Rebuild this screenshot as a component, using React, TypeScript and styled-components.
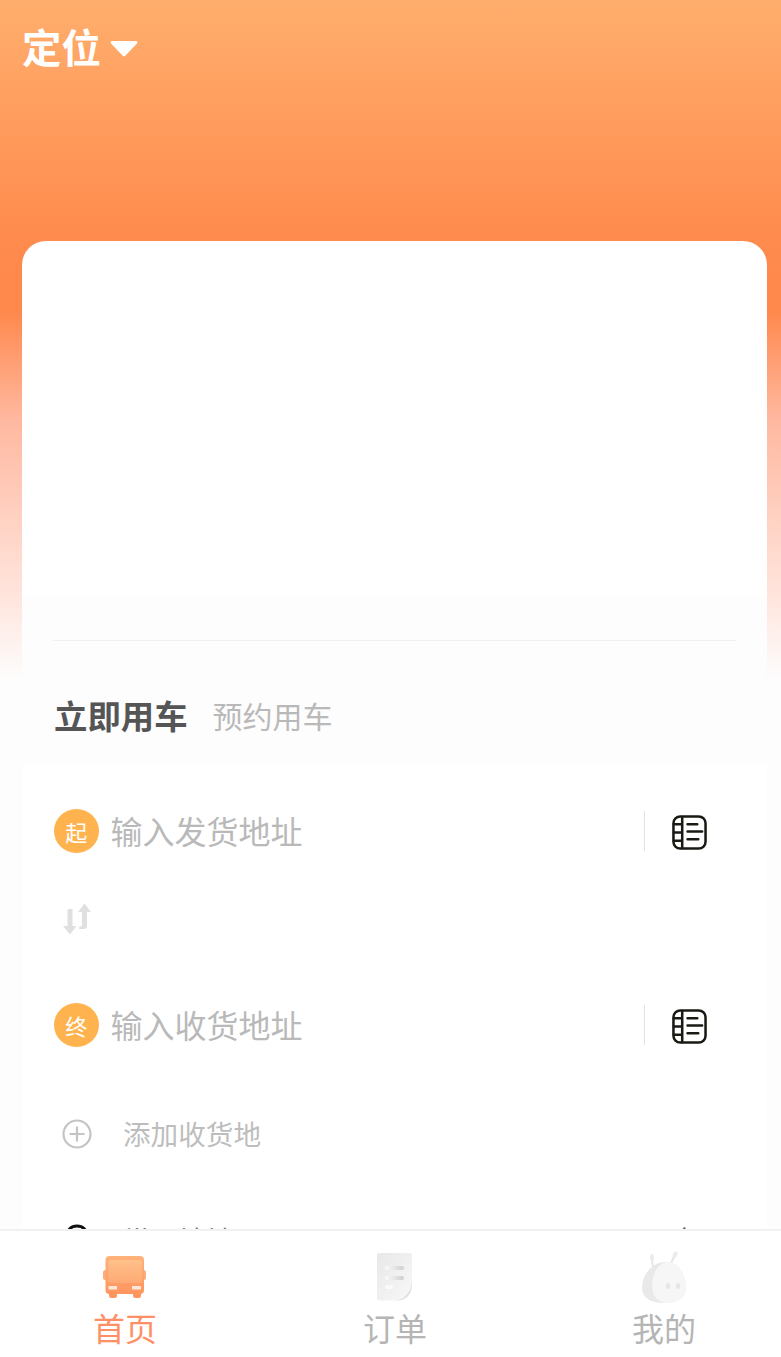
import React from 'react';
import styled, { createGlobalStyle } from 'styled-components';

const Global = createGlobalStyle`
  html, body { margin: 0; padding: 0; background: #fdfdfd; }
  * { box-sizing: border-box; }
`;
const font = `"Noto Sans CJK SC", "Noto Sans", sans-serif`;

const Page = styled.div`
  position: relative; width: 781px; height: 1357px; overflow: hidden; font-family: ${font};
  background: linear-gradient(180deg, #ffae6d 0px, #ff8a4d 245px, #ff884c 310px, #ffb8a0 420px, #ffe6de 600px, #fdfdfd 680px, #fdfdfd 100%);
`;
const TopBar = styled.div`
  height: 241px; padding: 17px 0 0 22px; display: flex; align-items: flex-start; gap: 9px;
`;
const City = styled.div`
  font-size: 39.4px; line-height: 58px; font-weight: 700; color: #fff;
`;
const Caret = styled.svg`
  width: 28px; height: 17px; margin-top: 23px;
`;
const BannerCard = styled.div`
  width: 745px; height: 439px; margin-left: 22px; border-radius: 24px 24px 12px 12px;
  background: linear-gradient(180deg, #fff 0, #fff 355px, #fdfdfd 356px, #fdfdfd 100%);
  padding: 399px 31px 0 30px;
`;
const Divider = styled.div`
  height: 1px; background: #f1f1f1;
`;
const Tabs = styled.div`
  height: 85px; padding: 0 0 15px 54px; display: flex; align-items: center; gap: 25px;
  background: #fdfdfd;
`;
const TabActive = styled.div`
  font-size: 33.4px; line-height: 70px; font-weight: 700; color: #555;
`;
const TabIdle = styled.div`
  font-size: 30px; line-height: 70px; color: #b9b9b9;
`;
const FormCard = styled.div`
  width: 745px; height: 600px; margin-left: 22px; background: #fff; padding-top: 44px;
  display: flex; flex-direction: column;
`;
const AddressRow = styled.div`
  height: 44px; padding-left: 32px; display: flex; align-items: center;
`;
const Badge = styled.div`
  width: 44.500px; height: 44px; border-radius: 50%; background: #ffb34f; color: #fff;
  font-size: 22px; display: flex; align-items: center; justify-content: center; flex: none;
`;
const Placeholder = styled.div`
  margin: 0 0 2px 12px; flex: 1; font-size: 32px; line-height: 42px; color: #b9b9b9;
`;
const VLine = styled.div`
  width: 1px; height: 40px; background: #e2e2e2; flex: none;
`;
const BookIcon = styled.svg`
  width: 35px; height: 35px; margin: 2px 60px 0 27px; flex: none;
`;
const SwapRow = styled.div`
  height: 150px; padding: 50px 0 0 40px;
`;
const SwapIcon = styled.svg`
  display: block; width: 30px; height: 32px;
`;
const AddRow = styled.div`
  margin-top: 65px; height: 44px; padding-left: 40px; display: flex; align-items: center; gap: 31px;
`;
const AddIcon = styled.svg`
  width: 30px; height: 30px; flex: none;
`;
const AddText = styled.div`
  font-size: 27.6px; line-height: 42px; margin-bottom: 2px; color: #bdbdbd;
`;
const CommonRow = styled.div`
  margin-top: 61px; height: 44px; padding: 0 69px 0 40px; display: flex; align-items: center; gap: 31px;
`;
const PinIcon = styled.svg`
  width: 30px; height: 36px; margin-top: 6px; flex: none;
`;
const CommonText = styled.div`
  flex: 1; font-size: 27.6px; line-height: 44px; color: #777;
`;
const CommonArrow = styled.div`
  font-size: 27.6px; line-height: 44px; color: #555;
`;
const TabBar = styled.nav`
  position: absolute; left: -10px; bottom: 0; width: 810px; height: 128px; background: #fff;
  border-top: 2px solid #f1f1f1; display: grid; grid-template-columns: 270px 270px 268px;
`;
const TabItem = styled.div`
  display: flex; flex-direction: column; align-items: center; padding-top: 21px;
`;
const TabSvg = styled.svg`
  width: 50px; height: 50px; display: block; overflow: visible;
`;
const TabLabel = styled.div<{ $active?: boolean }>`
  font-size: 32px; line-height: 46px; margin-top: 2px;
  color: ${p => (p.$active ? '#ff8f66' : '#b5b5b5')};
`;

const Book = () => (
  <BookIcon viewBox="0 0 36 36" fill="none" stroke="#1a1a14" strokeWidth="2.600" strokeLinecap="round">
    <rect x="1.500" y="1.500" width="33" height="33" rx="7" />
    <path d="M10.500 2v32M2 9.500h8M2 18h8M2 26.500h8" />
    <path d="M16 9.500h10M16 17h15M16 25h11" />
  </BookIcon>
);

export default function App() {
  return (
    <Page>
      <Global />
      <TopBar>
        <City>定位</City>
        <Caret viewBox="0 0 28 17">
          <path d="M2 1h24a1.500 1.500 0 0 1 1 2.500L15.500 15.500a2 2 0 0 1-3 0L1 3.500A1.500 1.500 0 0 1 2 1z" fill="#fff" />
        </Caret>
      </TopBar>
      <BannerCard>
        <Divider />
      </BannerCard>
      <Tabs>
        <TabActive>立即用车</TabActive>
        <TabIdle>预约用车</TabIdle>
      </Tabs>
      <FormCard>
        <AddressRow>
          <Badge>起</Badge>
          <Placeholder>输入发货地址</Placeholder>
          <VLine />
          <Book />
        </AddressRow>
        <SwapRow>
          <SwapIcon viewBox="0 0 30 32" fill="#e0e0e0">
            <path d="M5.500 7.500c0-1 .7-1.500 1.500-1.500h3.500v17h4L8 31.500 1 23h4.500z" />
            <path d="M20 9h-4l6.500-8.500L29 9h-4v14c0 1.500-1 3-2.500 3H17l.5-2.500c1.500 0 2.500-.2 2.500-1.500z" />
          </SwapIcon>
        </SwapRow>
        <AddressRow>
          <Badge>终</Badge>
          <Placeholder>输入收货地址</Placeholder>
          <VLine />
          <Book />
        </AddressRow>
        <AddRow>
          <AddIcon viewBox="0 0 30 30" fill="none" stroke="#c4c4c4" strokeWidth="2.200">
            <circle cx="15" cy="15" r="13.500" />
            <path d="M15 7.500v15M7.500 15h15" />
          </AddIcon>
          <AddText>添加收货地</AddText>
        </AddRow>
        <CommonRow>
          <PinIcon viewBox="0 0 30 36" fill="none" stroke="#111" strokeWidth="3">
            <path d="M15 2c6 0 10 4 10 10s-6 13-10 18C11 25 5 18 5 12S9 2 15 2z" />
          </PinIcon>
          <CommonText>常用地址</CommonText>
          <CommonArrow>去</CommonArrow>
        </CommonRow>
      </FormCard>
      <TabBar>
        <TabItem>
          <TabSvg viewBox="0 0 50 50">
            <defs>
              <linearGradient id="busG" x1="0" y1="0" x2="0" y2="1">
                <stop offset="0" stopColor="#ffc08a" />
                <stop offset="1" stopColor="#ffaa74" />
              </linearGradient>
              <linearGradient id="busB" x1="0" y1="0" x2="0" y2="1">
                <stop offset="0" stopColor="#ffb27a" />
                <stop offset="1" stopColor="#ff955e" />
              </linearGradient>
            </defs>
            <rect x="3" y="18" width="6" height="10" rx="2.500" fill="#ffab78" />
            <rect x="41" y="18" width="5" height="10" rx="2.500" fill="#ffab78" />
            <rect x="9" y="38" width="8" height="8" rx="2.500" fill="#ff955e" />
            <rect x="33" y="38" width="8" height="8" rx="2.500" fill="#ff955e" />
            <rect x="5.500" y="4" width="38.500" height="38" rx="4" fill="url(#busB)" />
            <rect x="8" y="8" width="34" height="23" rx="2" fill="url(#busG)" />
            <rect x="8.500" y="34" width="8.500" height="3.500" fill="#ffe6da" />
            <rect x="32" y="34" width="9" height="3.500" fill="#ffe6da" />
          </TabSvg>
          <TabLabel $active>首页</TabLabel>
        </TabItem>
        <TabItem>
          <TabSvg viewBox="0 0 50 50">
            <defs>
              <linearGradient id="docG" x1="0" y1="0" x2="1" y2="1">
                <stop offset="0" stopColor="#e8e8e8" />
                <stop offset="1" stopColor="#f8f8f8" />
              </linearGradient>
              <linearGradient id="lineG" x1="0" y1="0" x2="1" y2="0">
                <stop offset="0" stopColor="#fbfbfb" />
                <stop offset="1" stopColor="#cfcfcf" />
              </linearGradient>
            </defs>
            <path d="M7 3a2 2 0 0 1 2-2h31a2 2 0 0 1 2 2v30c0 9-6 15.500-14 15.500H10a3 3 0 0 1-3-3z" fill="url(#docG)" />
            <path d="M42 30c-1 10-8 18-17 18.500h3c8 0 14-6.500 14-15.500z" fill="#e2e2e2" />
            <rect x="15" y="14" width="19" height="4" rx="2" fill="url(#lineG)" />
            <rect x="15" y="24" width="19" height="4" rx="2" fill="url(#lineG)" />
            <rect x="15" y="33" width="8" height="4" rx="2" fill="#fbfbfb" />
          </TabSvg>
          <TabLabel>订单</TabLabel>
        </TabItem>
        <TabItem>
          <TabSvg viewBox="0 0 50 50">
            <path d="M31 13l5-10" stroke="#e4e4e4" strokeWidth="1.800" />
            <ellipse cx="36" cy="3" rx="2.200" ry="3.500" transform="rotate(25 36 3)" fill="#ececec" />
            <path d="M14 16l-1-10" stroke="#e4e4e4" strokeWidth="1.800" />
            <ellipse cx="13" cy="5.500" rx="2" ry="3.500" fill="#ececec" />
            <path d="M26 10c12 0 21 12 21 25 0 12-9 16-22 16C12 51 3 46 3 36 3 22 14 10 26 10z" fill="#e9e9e9" />
            <path d="M29 10c11 0 18 13 18 25 0 12-8 16-19 16-9 0-15-7-15-17 0-13 7-24 16-24z" fill="#f6f6f6" />
            <ellipse cx="29" cy="34" rx="2.200" ry="3" fill="#e6e6e6" />
            <ellipse cx="39" cy="34" rx="2.200" ry="3" fill="#e6e6e6" />
          </TabSvg>
          <TabLabel>我的</TabLabel>
        </TabItem>
      </TabBar>
    </Page>
  );
}
